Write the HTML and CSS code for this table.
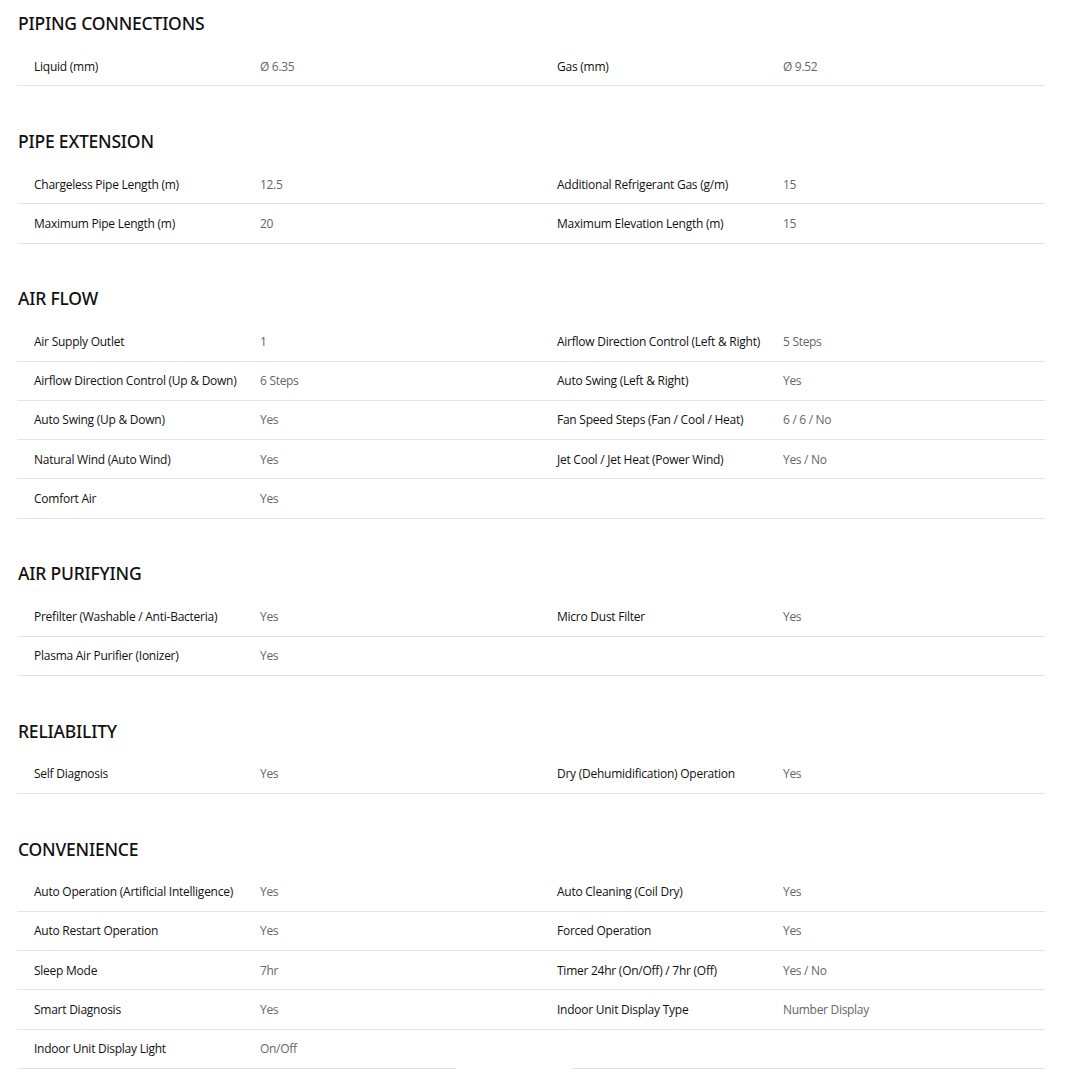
FILE: index.html
```html
<!DOCTYPE html>
<html>
<head>
<meta charset="utf-8">
<link rel="stylesheet" href="styles.css">
</head>
<body>
<div class="page">
  <section class="spec">
    <h2>PIPING CONNECTIONS</h2>
    <div class="row"><span class="k">Liquid (mm)</span><span class="v">Ø 6.35</span><span class="k">Gas (mm)</span><span class="v">Ø 9.52</span></div>
  </section>
  <section class="spec">
    <h2>PIPE EXTENSION</h2>
    <div class="row"><span class="k">Chargeless Pipe Length (m)</span><span class="v">12.5</span><span class="k">Additional Refrigerant Gas (g/m)</span><span class="v">15</span></div>
    <div class="row"><span class="k">Maximum Pipe Length (m)</span><span class="v">20</span><span class="k">Maximum Elevation Length (m)</span><span class="v">15</span></div>
  </section>
  <section class="spec">
    <h2>AIR FLOW</h2>
    <div class="row"><span class="k">Air Supply Outlet</span><span class="v">1</span><span class="k">Airflow Direction Control (Left &amp; Right)</span><span class="v">5 Steps</span></div>
    <div class="row"><span class="k">Airflow Direction Control (Up &amp; Down)</span><span class="v">6 Steps</span><span class="k">Auto Swing (Left &amp; Right)</span><span class="v">Yes</span></div>
    <div class="row"><span class="k">Auto Swing (Up &amp; Down)</span><span class="v">Yes</span><span class="k">Fan Speed Steps (Fan / Cool / Heat)</span><span class="v">6 / 6 / No</span></div>
    <div class="row"><span class="k">Natural Wind (Auto Wind)</span><span class="v">Yes</span><span class="k">Jet Cool / Jet Heat (Power Wind)</span><span class="v">Yes / No</span></div>
    <div class="row"><span class="k">Comfort Air</span><span class="v">Yes</span><span class="k"></span><span class="v"></span></div>
  </section>
  <section class="spec">
    <h2>AIR PURIFYING</h2>
    <div class="row"><span class="k">Prefilter (Washable / Anti-Bacteria)</span><span class="v">Yes</span><span class="k">Micro Dust Filter</span><span class="v">Yes</span></div>
    <div class="row"><span class="k">Plasma Air Purifier (Ionizer)</span><span class="v">Yes</span><span class="k"></span><span class="v"></span></div>
  </section>
  <section class="spec">
    <h2>RELIABILITY</h2>
    <div class="row"><span class="k">Self Diagnosis</span><span class="v">Yes</span><span class="k">Dry (Dehumidification) Operation</span><span class="v">Yes</span></div>
  </section>
  <section class="spec">
    <h2>CONVENIENCE</h2>
    <div class="row"><span class="k">Auto Operation (Artificial Intelligence)</span><span class="v">Yes</span><span class="k">Auto Cleaning (Coil Dry)</span><span class="v">Yes</span></div>
    <div class="row"><span class="k">Auto Restart Operation</span><span class="v">Yes</span><span class="k">Forced Operation</span><span class="v">Yes</span></div>
    <div class="row"><span class="k">Sleep Mode</span><span class="v">7hr</span><span class="k">Timer 24hr (On/Off) / 7hr (Off)</span><span class="v">Yes / No</span></div>
    <div class="row"><span class="k">Smart Diagnosis</span><span class="v">Yes</span><span class="k">Indoor Unit Display Type</span><span class="v">Number Display</span></div>
    <div class="row last"><span class="k">Indoor Unit Display Light</span><span class="v">On/Off</span><span class="k"></span><span class="v"></span><span class="mask"></span></div>
  </section>
</div>
</body>
</html>
```
FILE: styles.css
```css
* { box-sizing: border-box; }
html, body { margin: 0; padding: 0; background: #fff; }
body {
  font-family: "Open Sans", "Noto Sans", "Liberation Sans", sans-serif;
  color: #222;
}
.page {
  width: 1028px;
  margin-left: 17px;
  padding-top: 12px;
  padding-bottom: 40px;
}
.spec + .spec { margin-top: 43.75px; }
.spec h2 {
  margin: 0 0 13px 1px;
  font-family: "Noto Sans", "Open Sans", sans-serif;
  font-size: 17.5px;
  line-height: 22px;
  font-weight: 500;
  color: #111;
  letter-spacing: -0.2px;
}
.row {
  position: relative;
  display: grid;
  grid-template-columns: 226px 297px 226px 1fr;
  padding-left: 17px;
  padding-top: 1px;
  height: 39.25px;
  align-items: center;
  border-bottom: 1px solid #e4e4e4;
  font-size: 12px;
  line-height: 16px;
}
.k { color: #111; font-weight: 500; letter-spacing: -0.25px; }
.v { color: #666; font-weight: 400; letter-spacing: -0.3px; }
.mask {
  position: absolute;
  left: 439px;
  bottom: -1px;
  width: 116px;
  height: 1px;
  background: #fff;
}
```
